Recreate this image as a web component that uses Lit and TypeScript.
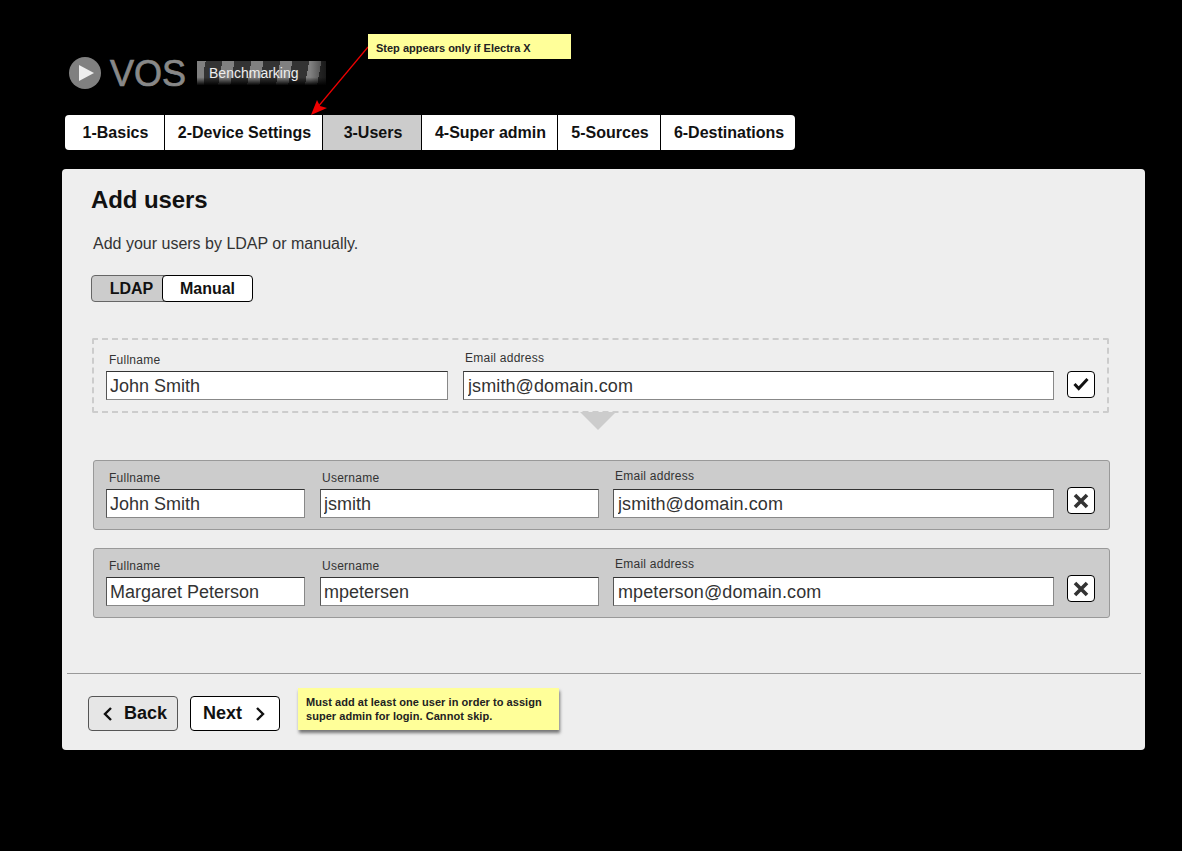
import { css, html, LitElement, svg } from 'lit'
import { customElement } from 'lit/decorators.js'

const TABS = ['1-Basics', '2-Device Settings', '3-Users', '4-Super admin', '5-Sources', '6-Destinations']

const USERS = [
  { name: 'John Smith', user: 'jsmith', email: 'jsmith@domain.com' },
  { name: 'Margaret Peterson', user: 'mpetersen', email: 'mpeterson@domain.com' },
]

const crossIcon = svg`<path d="M2 2 L14 14 M14 2 L2 14" fill="none" stroke="#333" stroke-width="3.6" />`
const checkIcon = svg`<path d="M1.5 7 L5.7 11.5 L14.5 2" fill="none" stroke="#111" stroke-width="3" />`

@customElement('app-root')
export class AppRoot extends LitElement {
  static styles = css`
    :host {
      display: block;
      font-family: 'Liberation Sans', Arial, sans-serif;
      color: #111;
    }
    .page {
      position: relative;
      box-sizing: border-box;
      height: 851px;
      padding: 57px 0 0 62px;
      background: #000;
      overflow: hidden;
    }
    .brand {
      display: flex;
      align-items: center;
      height: 32px;
      padding-left: 7px;
    }
    .play {
      width: 32px;
      height: 32px;
      flex: none;
    }
    .vos {
      margin: 2px 0 0 9px;
      font-size: 36px;
      line-height: 32px;
      color: #888;
      font-weight: normal;
      -webkit-text-stroke: 0.7px #888;
    }
    .banner {
      box-sizing: border-box;
      width: 129px;
      height: 24px;
      margin-left: 11px;
      padding-left: 12px;
      font-size: 14px;
      line-height: 24px;
      color: #eee;
      background:
        linear-gradient(to bottom, rgba(0, 0, 0, 0) 68%, rgba(0, 0, 0, 0.95) 100%),
        linear-gradient(to right, rgba(0, 0, 0, 0) 88%, rgba(0, 0, 0, 0.5) 100%),
        linear-gradient(#808080, #808080) 0 0 / 7px 100% no-repeat,
        repeating-linear-gradient(100deg, #808080 -3.5px 8.5px, #333 8.5px 25px);
    }
    .tabs {
      display: grid;
      grid-template-columns: 99px 158px 99px 136px 103px 135px;
      width: fit-content;
      margin: 26px 0 19px 3px;
      height: 35px;
      border-radius: 4px;
      overflow: hidden;
      background: #fff;
    }
    .tab {
      box-sizing: border-box;
      font-size: 16px;
      font-weight: bold;
      line-height: 35px;
      padding-left: 2px;
      text-align: center;
      border-left: 1px solid #000;
    }
    .tab:first-child {
      border-left: 0;
    }
    .tab.active {
      background: #ccc;
    }
    .panel {
      box-sizing: border-box;
      width: 1083px;
      height: 581px;
      padding: 17px 0 0 0;
      background: #eee;
      border-radius: 4px;
    }
    h1 {
      margin: 0 0 0 29px;
      font-size: 24px;
      line-height: 28px;
      letter-spacing: -0.1px;
    }
    .intro {
      margin: 20px 0 0 31px;
      font-size: 16px;
      line-height: 20px;
      color: #333;
    }
    .toggle {
      display: flex;
      width: 162px;
      height: 27px;
      margin: 21px 0 0 29px;
    }
    .toggle div {
      box-sizing: border-box;
      font-size: 16px;
      font-weight: bold;
      line-height: 25px;
      text-align: center;
    }
    .ldap {
      width: 75px;
      margin-right: -4px;
      padding-left: 6px;
      background: #ccc;
      border: 1px solid #666;
      border-radius: 4px 0 0 4px;
    }
    .manual {
      position: relative;
      width: 91px;
      background: #fff;
      border: 1px solid #000;
      border-radius: 4px;
    }
    .row {
      display: flex;
      align-items: flex-start;
      box-sizing: border-box;
    }
    .draft {
      width: 1017px;
      height: 75px;
      margin: 36px 0 0 30px;
      border: 2px dashed #ccc;
      border-radius: 2px;
      padding-left: 12px;
    }
    .added {
      width: 1017px;
      height: 70px;
      margin: 18px 0 0 31px;
      background: #ccc;
      border: 1px solid #999;
      border-radius: 3px;
      padding-left: 12px;
    }
    .pointer {
      width: 0;
      height: 0;
      margin: -1px 0 30px 518px;
      border-left: 18px solid transparent;
      border-right: 18px solid transparent;
      border-top: 18px solid #ccc;
    }
    .pointer + .added {
      margin-top: 0;
    }
    .field {
      display: flex;
      flex-direction: column;
      flex: none;
    }
    .field label {
      height: 14px;
      padding-left: 3px;
      font-size: 12px;
      line-height: 14px;
      letter-spacing: 0.25px;
      color: #333;
    }
    .field.tight label {
      padding-left: 2px;
    }
    .field input {
      box-sizing: border-box;
      width: 100%;
      height: 29px;
      padding: 2px 4px 0 3px;
      font: 18px 'Liberation Sans', Arial, sans-serif;
      color: #333;
      background: #fff;
      border: 1px solid;
      border-color: #333 #888 #888 #555;
      border-radius: 0;
      outline: none;
    }
    .field.email input {
      padding-left: 4px;
      letter-spacing: 0.1px;
    }
    .icon-btn {
      display: flex;
      align-items: center;
      justify-content: center;
      box-sizing: border-box;
      flex: none;
      width: 28px;
      height: 27px;
      padding: 0;
      background: #fff;
      border: 1px solid #000;
      border-radius: 4px;
    }
    .divider {
      height: 1px;
      margin: 55px 4px 0 5px;
      background: #999;
    }
    .footer {
      display: flex;
      align-items: flex-start;
      margin: 14px 0 0 26px;
    }
    .nav {
      display: flex;
      align-items: center;
      justify-content: center;
      gap: 13px;
      box-sizing: border-box;
      width: 90px;
      height: 35px;
      margin-top: 8px;
      padding-right: 2px;
      font-size: 18px;
      font-weight: bold;
      background: #fff;
      border: 1px solid #000;
      border-radius: 4px;
    }
    .nav.back {
      gap: 11px;
      margin-right: 12px;
      padding: 0 0 0 4px;
      background: #e6e6e6;
      border-color: #555;
    }
    .note {
      box-sizing: border-box;
      font-size: 11px;
      font-weight: bold;
      color: #222;
      background: #ffff99;
    }
    .skip {
      width: 261px;
      height: 42px;
      margin-left: 18px;
      padding: 7px 0 0 8px;
      line-height: 14px;
      letter-spacing: 0.05px;
      box-shadow: 1px 3px 3px rgba(0, 0, 0, 0.5);
    }
    .electra {
      position: absolute;
      left: 368px;
      top: 34px;
      width: 203px;
      height: 25px;
      padding-left: 8px;
      line-height: 28px;
    }
    .arrow {
      position: absolute;
      left: 300px;
      top: 40px;
    }
  `

  // inputOffset is where the input starts below the row's content top; labels sit at their own height above it
  renderField(kind: string, label: string, value: string, width: number, labelTop: number, inputOffset: number, gapLeft = 0) {
    return html`<div class="field ${kind}" style="width:${width}px;margin-left:${gapLeft}px">
      <label style="margin-top:${labelTop}px">${label}</label>
      <input .value=${value} readonly style="margin-top:${inputOffset - labelTop - 14}px" />
    </div>`
  }

  renderUser(u: { name: string; user: string; email: string }) {
    return html`<div class="row added">
      ${this.renderField('', 'Fullname', u.name, 199, 10, 28)}
      ${this.renderField('tight', 'Username', u.user, 279, 10, 28, 15)}
      ${this.renderField('tight email', 'Email address', u.email, 441, 8, 28, 14)}
      <button class="icon-btn" style="margin:26px 0 0 13px">
        <svg width="16" height="16" viewBox="0 0 16 16">${crossIcon}</svg>
      </button>
    </div>`
  }

  render() {
    return html`<div class="page">
      <div class="brand">
        <svg class="play" viewBox="0 0 32 32">
          <circle cx="16" cy="16" r="16" fill="#808080" />
          <path d="M10 8 L25 16 L10 24 Z" fill="#eee" />
        </svg>
        <span class="vos">VOS</span>
        <div class="banner">Benchmarking</div>
      </div>

      <nav class="tabs">
        ${TABS.map((t) => html`<div class="tab ${t === '3-Users' ? 'active' : ''}">${t}</div>`)}
      </nav>

      <main class="panel">
        <h1>Add users</h1>
        <p class="intro">Add your users by LDAP or manually.</p>
        <div class="toggle">
          <div class="ldap">LDAP</div>
          <div class="manual">Manual</div>
        </div>

        <div class="row draft">
          ${this.renderField('', 'Fullname', 'John Smith', 342, 13, 31)}
          ${this.renderField('tight email', 'Email address', 'jsmith@domain.com', 591, 11, 31, 15)}
          <button class="icon-btn" style="margin:31px 0 0 13px">
            <svg width="16" height="16" viewBox="0 0 16 16">${checkIcon}</svg>
          </button>
        </div>
        <div class="pointer"></div>

        ${USERS.map((u) => this.renderUser(u))}

        <div class="divider"></div>
        <div class="footer">
          <div class="nav back">
            <svg width="10" height="16" viewBox="0 0 10 16"><path d="M8 2 L2 8 L8 14" fill="none" stroke="#111" stroke-width="2.4" /></svg>
            Back
          </div>
          <div class="nav">
            Next
            <svg width="10" height="16" viewBox="0 0 10 16"><path d="M2 2 L8 8 L2 14" fill="none" stroke="#111" stroke-width="2.4" /></svg>
          </div>
          <div class="note skip">Must add at least one user in order to assign<br />super admin for login. Cannot skip.</div>
        </div>
      </main>

      <svg class="arrow" width="80" height="80" viewBox="0 0 80 80">
        <path d="M68 7 L17 68" stroke="#e00" stroke-width="1.2" fill="none" />
        <path d="M11 75 L17 60 L20 66 L27 68 Z" fill="#e00" />
      </svg>
      <div class="note electra">Step appears only if Electra X</div>
    </div>`
  }
}

declare global {
  interface HTMLElementTagNameMap {
    'app-root': AppRoot
  }
}
